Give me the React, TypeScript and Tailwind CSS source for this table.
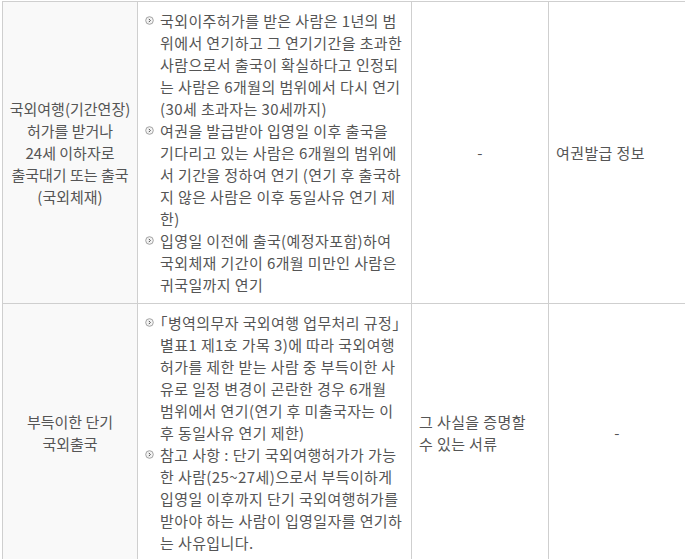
import React from "react";

const font = { fontFamily: '"Noto Sans CJK KR", "Noto Sans", sans-serif' };

function Bullet() {
  return (
    <svg className="absolute left-0 top-[6px]" width="9" height="9" viewBox="0 0 9 9">
      <circle cx="4.5" cy="4.5" r="3.8" fill="#f3f3f3" stroke="#9a9a9a" strokeWidth="0.9" />
      <path d="M3.8 2.9 L5.4 4.5 L3.8 6.1" fill="none" stroke="#555" strokeWidth="1" />
    </svg>
  );
}

function Item({ lines }: { lines: string[] }) {
  return (
    <li className="relative pl-[15px]">
      <Bullet />
      {lines.map((l, i) => (
        <span key={i} className="block whitespace-nowrap">
          {l}
        </span>
      ))}
    </li>
  );
}

const row1Items = [
  [
    "국외이주허가를 받은 사람은 1년의 범",
    "위에서 연기하고 그 연기기간을 초과한",
    "사람으로서 출국이 확실하다고 인정되",
    "는 사람은 6개월의 범위에서 다시 연기",
    "(30세 초과자는 30세까지)",
  ],
  [
    "여권을 발급받아 입영일 이후 출국을",
    "기다리고 있는 사람은 6개월의 범위에",
    "서 기간을 정하여 연기 (연기 후 출국하",
    "지 않은 사람은 이후 동일사유 연기 제",
    "한)",
  ],
  [
    "입영일 이전에 출국(예정자포함)하여",
    "국외체재 기간이 6개월 미만인 사람은",
    "귀국일까지 연기",
  ],
];

const row2Items = [
  [
    "「병역의무자 국외여행 업무처리 규정」",
    "별표1 제1호 가목 3)에 따라 국외여행",
    "허가를 제한 받는 사람 중 부득이한 사",
    "유로 일정 변경이 곤란한 경우 6개월",
    "범위에서 연기(연기 후 미출국자는 이",
    "후 동일사유 연기 제한)",
  ],
  [
    "참고 사항 : 단기 국외여행허가가 가능",
    "한 사람(25~27세)으로서 부득이하게",
    "입영일 이후까지 단기 국외여행허가를",
    "받아야 하는 사람이 입영일자를 연기하",
    "는 사유입니다.",
  ],
];

const cell = "border-r border-b border-[#cfcfcf] px-[7px] pt-[8px] pb-[7px]";
const headCell =
  "border-r border-b border-[#cfcfcf] pt-[8px] pb-[7px] flex flex-col items-center justify-center bg-[#f9f9f9] text-center whitespace-nowrap tracking-normal";

export default function App() {
  return (
    <div className="h-[559px] w-[685px] overflow-hidden bg-white pl-[2px] pt-[1px]" style={font}>
      <div className="grid w-[684px] grid-cols-[135px_274px_137px_137px] border-l border-t border-[#cfcfcf] text-[15px] leading-[22px] tracking-[0.4px] text-[#555] [font-feature-settings:'halt']">
        {/* row 1 */}
        <div className={headCell}>
          <span>국외여행(기간연장)</span>
          <span>허가를 받거나</span>
          <span>24세 이하자로</span>
          <span>출국대기 또는 출국</span>
          <span>(국외체재)</span>
        </div>
        <div className={cell}>
          <ul>
            {row1Items.map((lines, i) => (
              <Item key={i} lines={lines} />
            ))}
          </ul>
        </div>
        <div className={`${cell} flex items-center justify-center`}>-</div>
        <div className={`${cell} flex items-center`}>여권발급 정보</div>

        {/* row 2 */}
        <div className={headCell}>
          <span>부득이한 단기</span>
          <span>국외출국</span>
        </div>
        <div className={cell}>
          <ul>
            {row2Items.map((lines, i) => (
              <Item key={i} lines={lines} />
            ))}
          </ul>
        </div>
        <div className={`${cell} flex flex-col justify-center`}>
          <span>그 사실을 증명할</span>
          <span>수 있는 서류</span>
        </div>
        <div className={`${cell} flex items-center justify-center`}>-</div>
      </div>
    </div>
  );
}
